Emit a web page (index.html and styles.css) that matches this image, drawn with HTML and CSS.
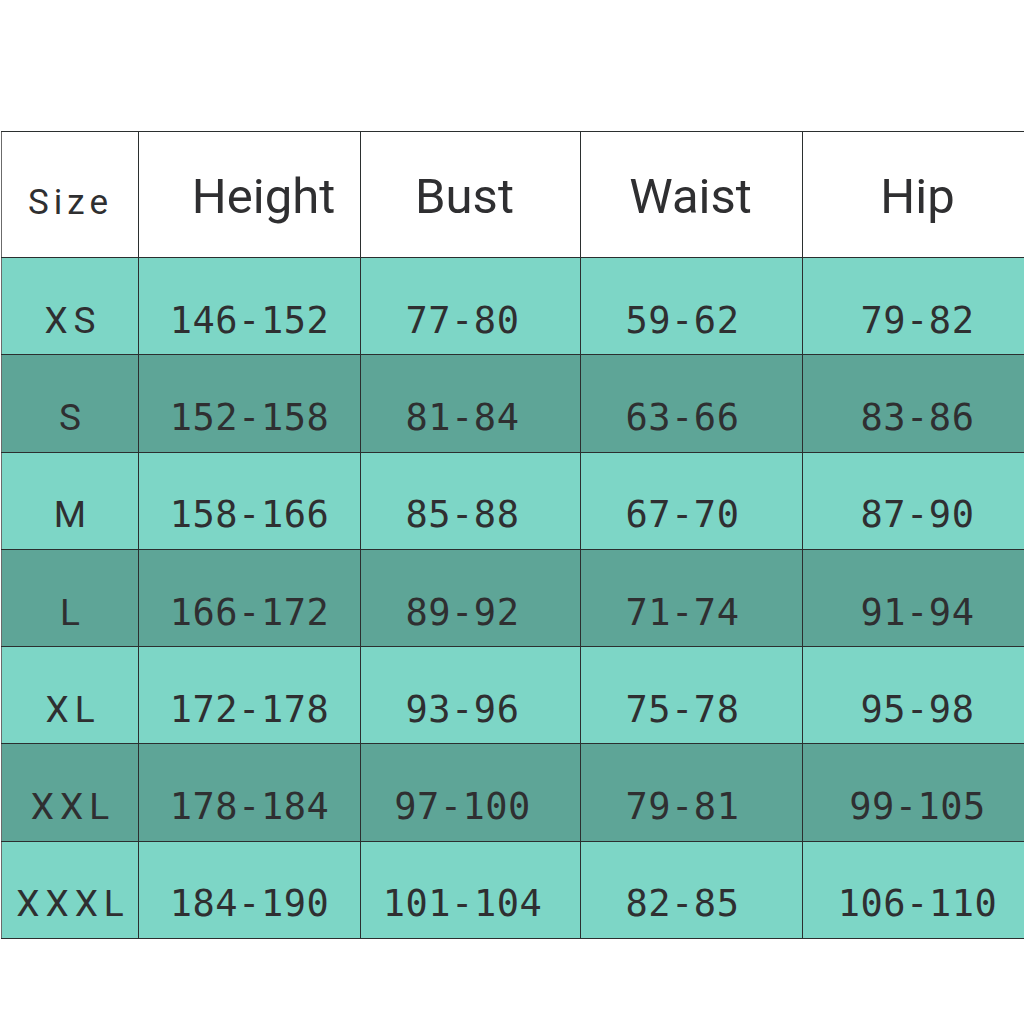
FILE: index.html
```html
<!DOCTYPE html>
<html>
<head>
<meta charset="utf-8">
<link rel="stylesheet" href="styles.css">
</head>
<body>
<div class="page">
<table class="chart">
  <colgroup>
    <col class="c1"><col class="c2"><col class="c3"><col class="c4"><col class="c5">
  </colgroup>
  <thead>
    <tr class="head">
      <th class="size-h">Size</th>
      <th class="h-height">Height</th>
      <th class="h-bust">Bust</th>
      <th class="h-waist">Waist</th>
      <th class="h-hip">Hip</th>
    </tr>
  </thead>
  <tbody>
    <tr class="light"><td>XS</td><td>146-152</td><td class="b">77-80</td><td class="w">59-62</td><td class="hp">79-82</td></tr>
    <tr class="dark"><td>S</td><td>152-158</td><td class="b">81-84</td><td class="w">63-66</td><td class="hp">83-86</td></tr>
    <tr class="light"><td>M</td><td>158-166</td><td class="b">85-88</td><td class="w">67-70</td><td class="hp">87-90</td></tr>
    <tr class="dark"><td>L</td><td>166-172</td><td class="b">89-92</td><td class="w">71-74</td><td class="hp">91-94</td></tr>
    <tr class="light"><td>XL</td><td>172-178</td><td class="b">93-96</td><td class="w">75-78</td><td class="hp">95-98</td></tr>
    <tr class="dark"><td>XXL</td><td>178-184</td><td class="b">97-100</td><td class="w">79-81</td><td class="hp">99-105</td></tr>
    <tr class="light"><td>XXXL</td><td>184-190</td><td class="b">101-104</td><td class="w">82-85</td><td class="hp">106-110</td></tr>
  </tbody>
</table>
</div>
</body>
</html>
```
FILE: styles.css
```css
html, body {
  margin: 0;
  padding: 0;
  background: #ffffff;
}
.page {
  width: 1024px;
  height: 1024px;
  padding-top: 131px;
  padding-left: 1px;
  box-sizing: border-box;
}
.chart {
  border-collapse: collapse;
  table-layout: fixed;
  width: 1023px;
  color: #2f2f31;
}
.c1 { width: 137px; }
.c2 { width: 222px; }
.c3 { width: 220px; }
.c4 { width: 222px; }
.c5 { width: 222px; }
.chart th, .chart td {
  border: 1px solid #2b2f2f;
  padding: 0;
  text-align: center;
  white-space: nowrap;
  box-sizing: border-box;
}
.chart tr > :first-child { border-left-color: #6b6b6b; }
.chart tr > :last-child { border-right-color: #9a9a9a; }
.head th {
  height: 126px;
  background: #ffffff;
  font-family: Roboto, "Noto Sans", sans-serif;
  font-weight: 400;
  font-size: 49px;
  vertical-align: middle;
  padding-top: 4px;
}
.head th.size-h {
  font-size: 35px;
  letter-spacing: 5px;
  padding-top: 16px;
  padding-left: 1px;
}
.head th.h-height { padding-left: 28px; }
.head th.h-bust { padding-right: 12px; }
.head th.h-waist { padding-right: 2px; }
.head th.h-hip { padding-left: 8px; }
.chart tbody td {
  height: 97.3px;
  font-family: "DejaVu Sans Mono", monospace;
  font-size: 37px;
  letter-spacing: 0.5px;
  vertical-align: middle;
  padding-top: 28px;
}
.chart tbody td:first-child {
  font-family: Roboto, "Noto Sans", sans-serif;
  font-size: 37px;
  letter-spacing: 6px;
  padding-left: 6px;
}
.chart tbody td.b { padding-right: 16px; }
.chart tbody td.w { padding-right: 18px; }
.chart tbody td.hp { padding-left: 8px; }
.light td { background: #7dd6c6; }
.dark td { background: #5ea597; }
```
